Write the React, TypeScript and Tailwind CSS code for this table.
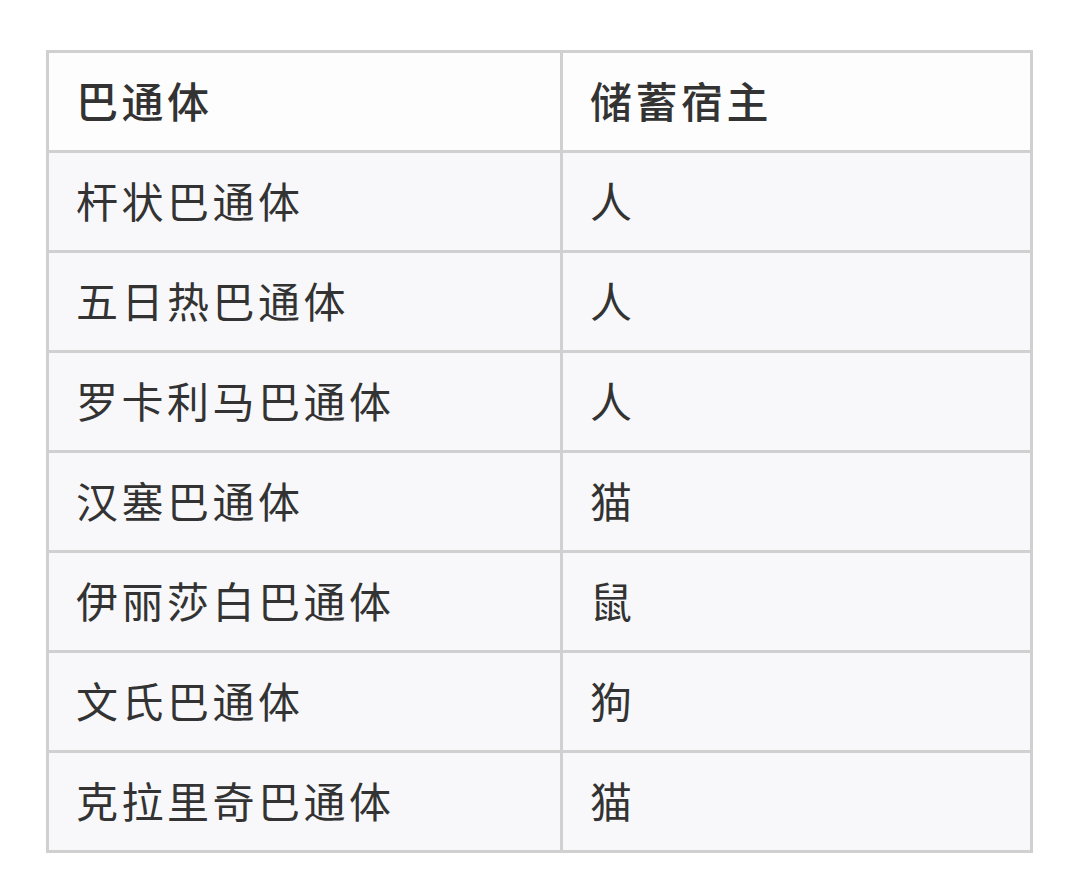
import React from 'react';

const rows: [string, string][] = [
  ['杆状巴通体', '人'],
  ['五日热巴通体', '人'],
  ['罗卡利马巴通体', '人'],
  ['汉塞巴通体', '猫'],
  ['伊丽莎白巴通体', '鼠'],
  ['文氏巴通体', '狗'],
  ['克拉里奇巴通体', '猫'],
];

const font = { fontFamily: '"Noto Sans CJK SC", "Noto Sans", sans-serif' };

export default function App() {
  return (
    <div className="w-[1080px] h-[890px] bg-white pt-[50px] pl-[46px]" style={font}>
      <table className="border-collapse w-[987px] text-[#333] text-[42px] tracking-[3.5px]">
        <thead>
          <tr className="bg-[#fdfdfd] h-[100px]">
            <th className="border-[3px] border-[#d0d0d0] w-[514px] text-left font-medium pl-[27px] pb-1">巴通体</th>
            <th className="border-[3px] border-[#d0d0d0] text-left font-medium pl-[27px] pb-1">储蓄宿主</th>
          </tr>
        </thead>
        <tbody>
          {rows.map(([name, host]) => (
            <tr key={name} className="bg-[#f8f8fa] h-[100px]">
              <td className="border-[3px] border-[#d0d0d0] pl-[27px] pb-1">{name}</td>
              <td className="border-[3px] border-[#d0d0d0] pl-[27px] pb-1">{host}</td>
            </tr>
          ))}
        </tbody>
      </table>
    </div>
  );
}
